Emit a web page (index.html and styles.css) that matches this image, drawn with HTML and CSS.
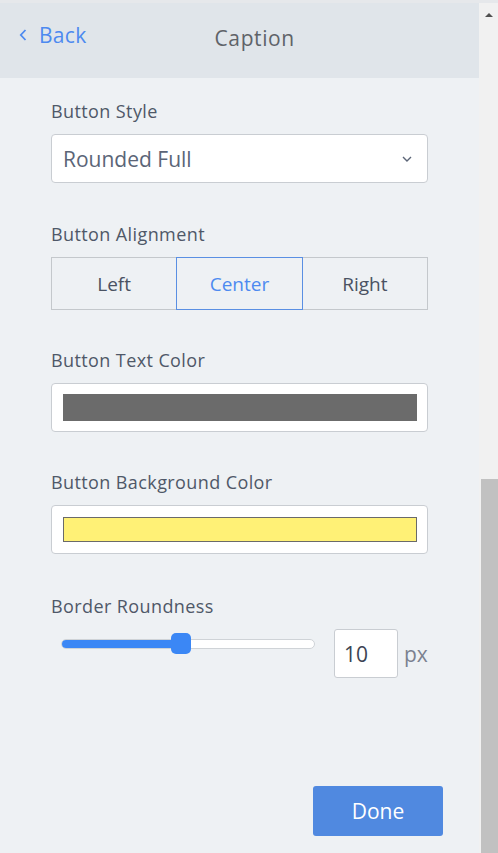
FILE: index.html
```html
<!DOCTYPE html>
<html>
<head>
<meta charset="utf-8">
<link rel="stylesheet" href="styles.css">
</head>
<body>
<div class="frame">
  <div class="panel">
    <div class="header">
      <a class="back">
        <svg class="back-icon" width="8" height="12" viewBox="0 0 8 12"><path d="M6.5 1 L1.8 6 L6.5 11" fill="none" stroke="#4d8af0" stroke-width="1.8"/></svg>
        <span>Back</span>
      </a>
      <div class="title">Caption</div>
    </div>
    <div class="content">
      <div class="field">
        <div class="label">Button Style</div>
        <div class="select">
          <span>Rounded Full</span>
          <svg width="10" height="6" viewBox="0 0 10 6"><path d="M1 1 L5 5 L9 1" fill="none" stroke="#5b6577" stroke-width="1.4"/></svg>
        </div>
      </div>
      <div class="field shift">
        <div class="label">Button Alignment</div>
        <div class="segmented">
          <div class="seg">Left</div>
          <div class="seg active">Center</div>
          <div class="seg">Right</div>
        </div>
      </div>
      <div class="field">
        <div class="label">Button Text Color</div>
        <div class="colorbox"><div class="swatch grey"></div></div>
      </div>
      <div class="field">
        <div class="label">Button Background Color</div>
        <div class="colorbox"><div class="swatch yellow"></div></div>
      </div>
      <div class="field shift2">
        <div class="label">Border Roundness</div>
        <div class="range-row">
          <div class="slider">
            <div class="track"><div class="fill"></div></div>
            <div class="thumb"></div>
          </div>
          <div class="num">10</div>
          <div class="unit">px</div>
        </div>
      </div>
    </div>
    <div class="footer">
      <button class="done">Done</button>
    </div>
  </div>
  <div class="scrollbar">
    <div class="arrow"></div>
    <div class="thumb-bar"></div>
  </div>
</div>
</body>
</html>
```
FILE: styles.css
```css
html, body {
  margin: 0;
  padding: 0;
}
body {
  background: #e6e8eb;
  padding-top: 3px;
  font-family: "Open Sans", "Noto Sans", sans-serif;
  width: 498px;
  height: 853px;
  box-sizing: border-box;
  overflow: hidden;
}
.frame {
  display: flex;
  height: 850px;
}
.panel {
  width: 479px;
  background: #eef1f4;
  display: flex;
  flex-direction: column;
}
.header {
  height: 75px;
  background: #e0e5ea;
  display: flex;
  align-items: flex-start;
  padding: 18px 0 0 19px;
  box-sizing: border-box;
}
.back {
  display: flex;
  align-items: center;
  gap: 12px;
  color: #4d8af0;
  font-size: 21px;
  letter-spacing: 0.3px;
  line-height: 28px;
}
.title {
  margin-left: 128px;
  margin-top: 3px;
  color: #5f6368;
  font-size: 21px;
  letter-spacing: 0.6px;
  line-height: 28px;
}
.content {
  padding: 23px 0 0 51px;
  display: flex;
  flex-direction: column;
  gap: 40px;
}
.field {
  display: flex;
  flex-direction: column;
  gap: 13px;
  width: 377px;
}
.field.shift {
  margin-top: 1px;
}
.field.shift2 {
  margin-top: 2px;
}
.label {
  font-size: 18px;
  letter-spacing: 0.4px;
  line-height: 20px;
  color: #4f5868;
}
.select {
  height: 49px;
  box-sizing: border-box;
  background: #fff;
  border: 1px solid #c9cdd2;
  border-radius: 4px;
  display: flex;
  align-items: center;
  justify-content: space-between;
  padding: 0 15px 0 11px;
  font-size: 21px;
  color: #5b6577;
}
.segmented {
  display: flex;
  height: 53px;
}
.seg {
  flex: 1;
  display: flex;
  align-items: center;
  justify-content: center;
  border: 1px solid #c4c8cc;
  font-size: 19px;
  color: #4a5262;
  box-sizing: border-box;
}
.seg + .seg {
  margin-left: -1px;
}
.seg.active {
  border-color: #5a8fe3;
  color: #4d8af0;
  position: relative;
}
.colorbox {
  height: 49px;
  box-sizing: border-box;
  background: #fff;
  border: 1px solid #c9cdd2;
  border-radius: 4px;
  padding: 10px 10px 10px 11px;
  display: flex;
}
.swatch {
  flex: 1;
  box-sizing: border-box;
}
.swatch.grey {
  background: #6b6b6b;
}
.swatch.yellow {
  background: #fff176;
  border: 1px solid #6a6a6a;
  margin: 1px 0;
}
.range-row {
  display: flex;
  align-items: flex-start;
  height: 49px;
}
.slider {
  width: 254px;
  margin: 4px 0 0 10px;
  height: 21px;
  position: relative;
  display: flex;
  align-items: center;
}
.track {
  width: 100%;
  height: 10px;
  box-sizing: border-box;
  background: #fff;
  border: 1px solid #cfd3d7;
  border-radius: 5px;
  overflow: hidden;
}
.fill {
  width: 120px;
  height: 100%;
  background: #3b87f5;
}
.thumb {
  position: absolute;
  left: 110px;
  top: 0;
  width: 20px;
  height: 21px;
  border-radius: 5px;
  background: #3b87f5;
}
.num {
  margin-left: 19px;
  width: 64px;
  height: 49px;
  box-sizing: border-box;
  background: #fff;
  border: 1px solid #c9cdd2;
  border-radius: 3px;
  display: flex;
  align-items: center;
  padding-left: 9px;
  font-size: 21px;
  color: #3c4453;
}
.unit {
  align-self: center;
  margin-left: 6px;
  font-size: 21px;
  color: #7b8190;
}
.footer {
  display: flex;
  justify-content: flex-end;
  padding: 108px 36px 0 0;
}
.done {
  width: 130px;
  height: 50px;
  border: none;
  border-radius: 3px;
  background: #5089e0;
  color: #fff;
  font-family: inherit;
  font-size: 21px;
}
.scrollbar {
  width: 19px;
  background: #f1f1f1;
  display: flex;
  flex-direction: column;
  justify-content: space-between;
}
.arrow {
  width: 0;
  height: 0;
  margin: 10px 0 0 6px;
  border-left: 4px solid transparent;
  border-right: 4px solid transparent;
  border-bottom: 4px solid #505050;
}
.thumb-bar {
  height: 374px;
  margin-left: 2px;
  background: #c1c1c1;
}
```
